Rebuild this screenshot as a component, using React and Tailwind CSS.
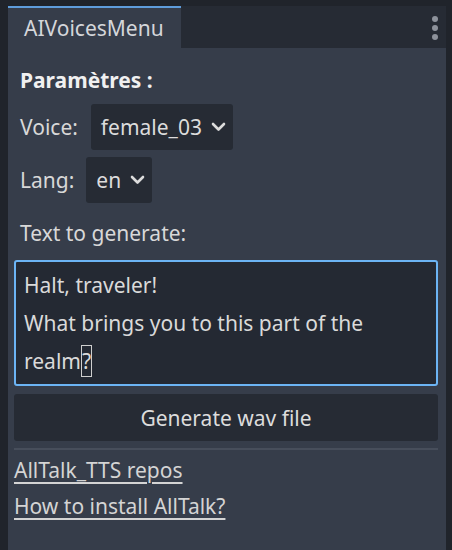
import React from "react";

const font = { fontFamily: '"Noto Sans", "Open Sans", sans-serif' };

const Chevron = () => (
  <svg width="15" height="10" viewBox="0 0 15 10" fill="none">
    <path
      d="M2 2l5.5 5.5L13 2"
      stroke="#dcdcdc"
      strokeWidth="2.6"
      strokeLinecap="round"
      strokeLinejoin="round"
    />
  </svg>
);

const OptionRow = ({ label, value, gap }) => (
  <div className="flex items-center h-[46px]">
    <span className={`pl-[6px] ${gap} text-[#d8d8d8]`}>{label}</span>
    <div className="h-[46px] flex items-center bg-[#262b34] rounded-[3px] pl-[10px] pr-[7px] gap-[9px]">
      <span className="text-[#dcdcdc]">{value}</span>
      <Chevron />
    </div>
  </div>
);

export default function App() {
  return (
    <div
      className="w-[452px] h-[550px] bg-[#20242b] pt-[6px] pl-[8px] pr-[6px] flex flex-col text-[21px] leading-[30px] overflow-hidden"
      style={font}
    >
      {/* tab bar */}
      <div className="flex h-[42px] shrink-0">
        <div className="w-[173px] bg-[#363d4a] border-t-2 border-[#5f9ddb] flex items-center pl-[16px] text-[#d4d6da]">
          AIVoicesMenu
        </div>
        <div className="flex-1 bg-[#262b34] flex justify-end pr-[8px] pt-[10px]">
          <div className="flex flex-col gap-[3px]">
            <span className="w-[6px] h-[6px] rounded-full bg-[#8d929b]" />
            <span className="w-[6px] h-[6px] rounded-full bg-[#8d929b]" />
            <span className="w-[6px] h-[6px] rounded-full bg-[#8d929b]" />
          </div>
        </div>
      </div>

      {/* panel body */}
      <div className="flex-1 bg-[#363d4a] pl-[6px] pr-[8px] flex flex-col">
        <div className="mt-[17px] pl-[6px] font-bold text-[#f0f0f0]">
          Paramètres :
        </div>
        <div className="mt-[9px]">
          <OptionRow label="Voice:" value="female_03" gap="mr-[13px]" />
        </div>
        <div className="mt-[7px]">
          <OptionRow label="Lang:" value="en" gap="mr-[12px]" />
        </div>
        <div className="mt-[15px] pl-[6px] text-[#d8d8d8]">
          Text to generate:
        </div>
        <div className="mt-[12px] h-[126px] border-2 border-[#6cb4f4] rounded-[3px] bg-[#242933] px-[8px] pt-[4px] text-[#dadada] leading-[38px]">
          <div>Halt, traveler!</div>
          <div>What brings you to this part of the</div>
          <div>
            realm
            <span className="border border-[#cfcfcf] inline-block leading-[30px]">
              ?
            </span>
          </div>
        </div>
        <button className="mt-[8px] h-[47px] bg-[#262b34] rounded-[3px] text-[#dcdcdc] flex items-center justify-center">
          Generate wav file
        </button>
        <div className="mt-[7px] h-[2px] bg-[#474e5b]" />
        <div className="mt-[5px] flex flex-col gap-[6px] items-start text-[#d4d4d4]">
          <a className="underline underline-offset-[4px] decoration-[1.5px]">
            AllTalk_TTS repos
          </a>
          <a className="underline underline-offset-[4px] decoration-[1.5px]">
            How to install AllTalk?
          </a>
        </div>
      </div>
    </div>
  );
}
